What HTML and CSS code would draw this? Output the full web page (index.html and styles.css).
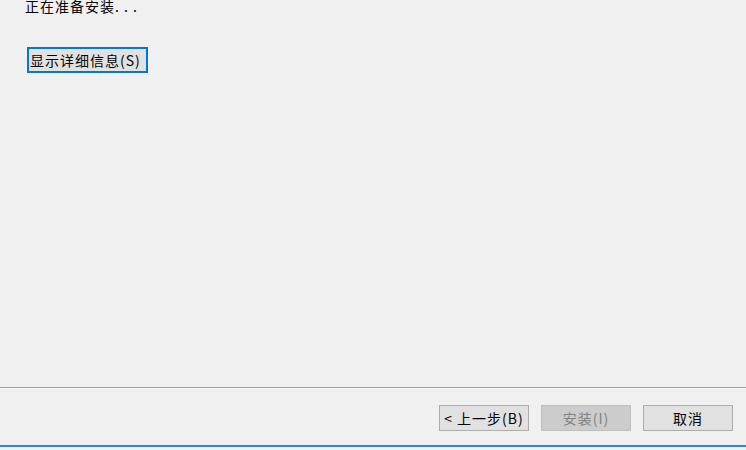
FILE: index.html
```html
<!DOCTYPE html>
<html lang="zh-CN">
<head>
<meta charset="utf-8">
<title>安装</title>
<link rel="stylesheet" href="styles.css">
</head>
<body>
<div class="window">
  <main class="content">
    <p class="status">正在准备安装. . .</p>
    <button class="btn btn-details">显示详细信息(S)</button>
  </main>
  <footer class="footer">
    <div class="actions">
      <button class="btn btn-action">&lt; 上一步(B)</button>
      <button class="btn btn-action" disabled>安装(I)</button>
      <button class="btn btn-action">取消</button>
    </div>
  </footer>
  <div class="accent"></div>
</div>
</body>
</html>
```
FILE: styles.css
```css
html, body {
  margin: 0;
  padding: 0;
  background: #f0f0f0;
}

body {
  font-family: "Noto Sans CJK SC", "Noto Sans", sans-serif;
  font-size: 14px;
  color: #000;
}

.window {
  height: 447px;
  display: flex;
  flex-direction: column;
  background: #f0f0f0;
}

.content {
  flex: 1;
  display: flex;
  flex-direction: column;
  align-items: flex-start;
  padding-left: 25px;
}

.status {
  margin: -4px 0 0;
  line-height: 20px;
  font-size: 14px;
  letter-spacing: 1px;
}

.btn {
  font-family: inherit;
  font-size: 14px;
  color: #000;
  background: #e1e1e1;
  border: 1px solid #adadad;
  height: 26px;
  padding: 0;
  margin: 0;
  line-height: 22px;
  letter-spacing: 1px;
  box-sizing: border-box;
}

.btn-details {
  margin-top: 31px;
  margin-left: 2px;
  width: 121px;
  border: 1px solid #0078d7;
  box-shadow: inset 0 0 0 1px #0078d7;
  padding: 0 2px;
  text-align: left;
}

.footer {
  height: 57px;
  border-top: 1px solid #a0a0a0;
  box-shadow: inset 0 1px 0 #fbfbfb;
  display: flex;
  justify-content: flex-end;
}

.actions {
  display: flex;
  gap: 12px;
  padding: 17px 13px 0 0;
  align-items: flex-start;
}

.btn-action {
  width: 90px;
}

.btn-action:disabled {
  background: #cccccc;
  border-color: #bfbfbf;
  color: #838383;
}

.accent {
  height: 2px;
  background: #2b88d8;
}
```
